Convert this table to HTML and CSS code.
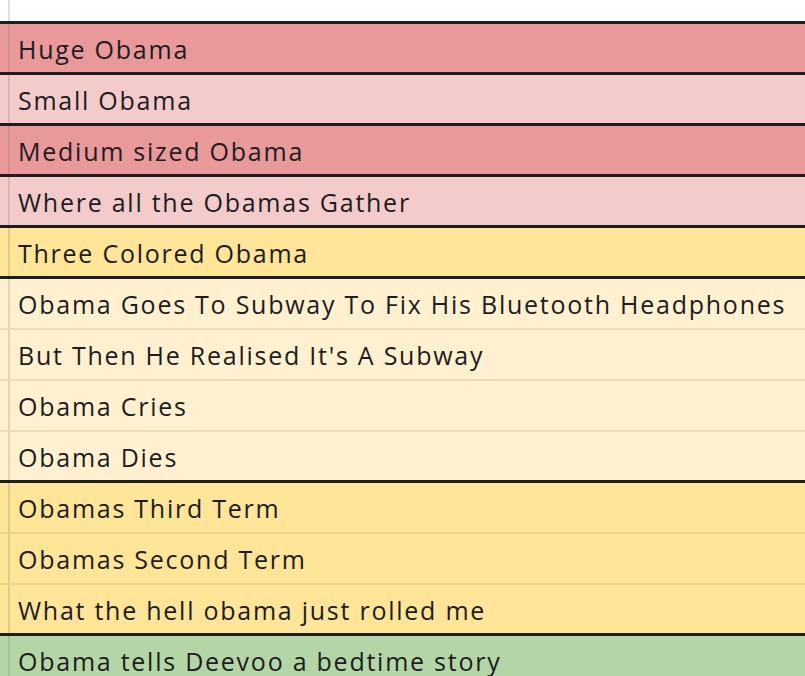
FILE: index.html
```html
<!DOCTYPE html>
<html>
<head>
<meta charset="utf-8">
<link rel="stylesheet" href="styles.css">
</head>
<body>
<div class="sheet">
  <div class="row top"><div class="gut"></div><div class="cell"></div></div>
  <div class="row red thick"><div class="gut"></div><div class="cell">Huge Obama</div></div>
  <div class="row pink thick"><div class="gut"></div><div class="cell">Small Obama</div></div>
  <div class="row red thick"><div class="gut"></div><div class="cell">Medium sized Obama</div></div>
  <div class="row pink thick"><div class="gut"></div><div class="cell">Where all the Obamas Gather</div></div>
  <div class="row gold thick"><div class="gut"></div><div class="cell">Three Colored Obama</div></div>
  <div class="row cream thin"><div class="gut"></div><div class="cell">Obama Goes To Subway To Fix His Bluetooth Headphones</div></div>
  <div class="row cream thin"><div class="gut"></div><div class="cell">But Then He Realised It's A Subway</div></div>
  <div class="row cream thin"><div class="gut"></div><div class="cell">Obama Cries</div></div>
  <div class="row cream thick"><div class="gut"></div><div class="cell">Obama Dies</div></div>
  <div class="row gold thin"><div class="gut"></div><div class="cell">Obamas Third Term</div></div>
  <div class="row gold thin"><div class="gut"></div><div class="cell">Obamas Second Term</div></div>
  <div class="row gold thick"><div class="gut"></div><div class="cell">What the hell obama just rolled me</div></div>
  <div class="row green"><div class="gut"></div><div class="cell">Obama tells Deevoo a bedtime story</div></div>
</div>
</body>
</html>
```
FILE: styles.css
```css
html, body {
  margin: 0;
  padding: 0;
  background: #ffffff;
  overflow: hidden;
}
.sheet {
  display: flex;
  flex-direction: column;
  width: 805px;
  font-family: "Open Sans", Lato, sans-serif;
  font-size: 25px;
  letter-spacing: 1.75px;
  color: #1c1c22;
}
.row {
  display: flex;
  height: 51px;
  box-sizing: border-box;
}
.row.top {
  height: 24px;
  border-bottom: 3px solid #1e1e1e;
}
.row.thick {
  border-bottom: 3px solid #1e1e1e;
}
.row.thin {
  border-bottom: 2px solid rgba(150, 120, 60, 0.18);
}
.gut {
  width: 8px;
  flex: none;
  border-right: 2px solid rgba(120, 110, 90, 0.22);
}
.cell {
  flex: 1;
  padding: 10px 0 0 8px;
  white-space: nowrap;
  line-height: 30px;
}
.red { background: #e9999a; }
.pink { background: #f3cbcb; }
.gold { background: #ffe598; }
.cream { background: #fff1cf; }
.green { background: #b4d6a6; }
```
